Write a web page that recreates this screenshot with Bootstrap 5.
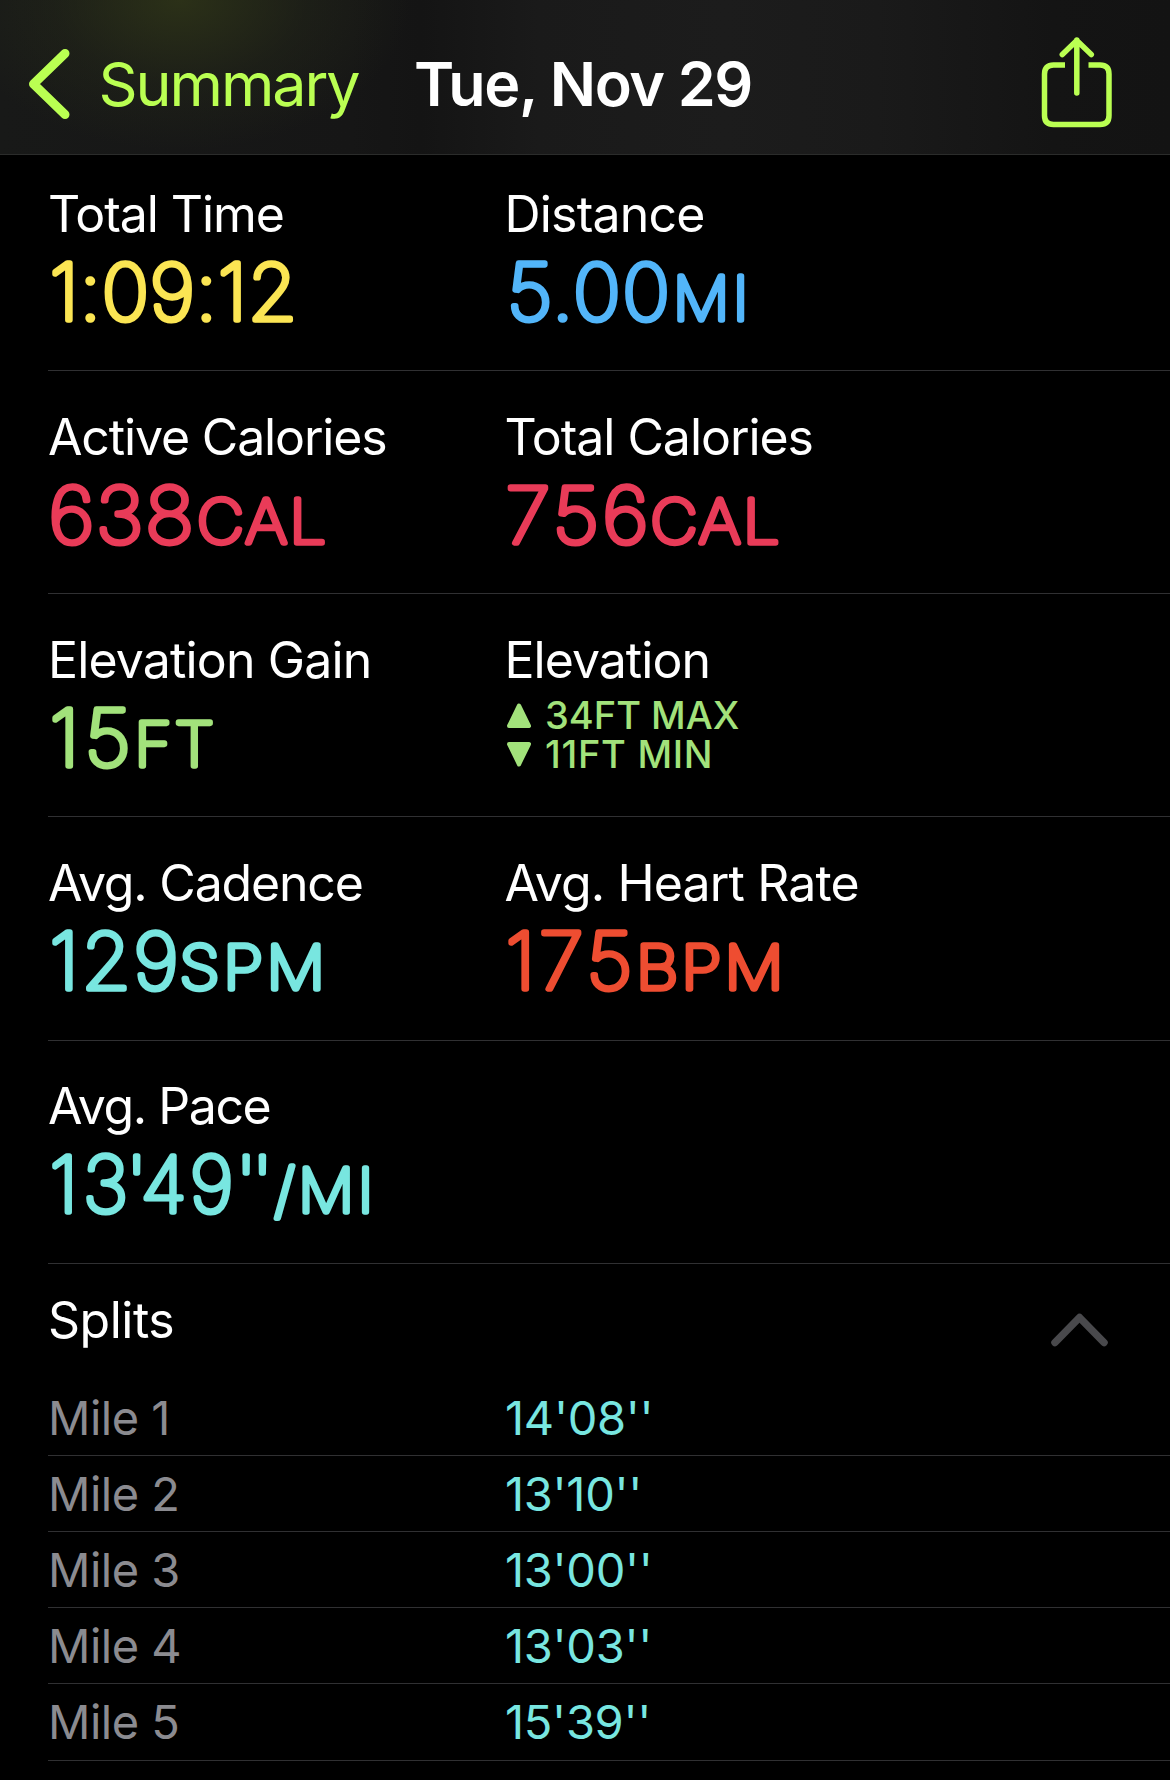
<!DOCTYPE html>
<html lang="en" data-bs-theme="dark">
<head>
<meta charset="utf-8">
<meta name="viewport" content="width=device-width, initial-scale=1">
<title>Workout – Tue, Nov 29</title>
<link href="https://cdn.jsdelivr.net/npm/bootstrap@5.3.0/dist/css/bootstrap.min.css" rel="stylesheet">
<style>
body{background:#000;color:#fff;font-family:Inter,"Liberation Sans",sans-serif;overflow-x:hidden}
.topbar{height:155px;padding:0 57px 0 28px;border-bottom:1px solid #2b2c2b;
  background:radial-gradient(ellipse 230px 150px at 180px 0,rgba(50,57,24,.75),rgba(40,45,25,.36) 55%,rgba(30,32,24,0)),
  linear-gradient(90deg,#181918 0,#161616 30%,#141414 36%,#1a1a1a 46%,#1c1c1c 62%,#1a1a1a 75%,#141414 90%,#131313 100%)}
.accent{color:#baff52}
.back-icon{margin-top:14px}
.share-icon{margin-top:10px}
.navlink,.navtitle{font-size:61px;line-height:76px;white-space:nowrap;margin-top:14px}
.navlink{letter-spacing:-2.08px;margin-left:26.5px}
.navtitle{font-weight:600;letter-spacing:-1.4px;margin-left:55.5px}
.stat-row{margin-left:48px;padding:36px 0 30px;border-bottom:1px solid #303032}
.stat-row:first-child{padding-top:29px}
.stat-row.r4{padding-bottom:31px}
.stat-row.r5{padding:35px 0 31px}
.stat{flex:0 0 456.5px}
.lbl{font-size:50px;line-height:60px;height:60px;white-space:nowrap}
.val{display:block;width:400px;height:96px;overflow:visible;font-size:77.5px;font-weight:100;stroke-width:5.6px;stroke-linejoin:round;stroke-linecap:round;fill:currentColor;stroke:currentColor}
.unit-sm{font-size:60px}
.elev{height:96px;padding-top:6px;font-size:38px;line-height:39px;font-weight:500;white-space:nowrap}
.elev svg{margin-left:2.5px;margin-right:14px}
.ls-min{letter-spacing:.7px}
.c-time{color:#fbe553}.c-dist{color:#52b5f9}.c-cal{color:#e93b58}.c-elev{color:#a2e27b}.c-pace{color:#78e6e0}.c-heart{color:#ee4d31}
.splits-head{height:116px;margin-left:48px;padding:26px 62px 0 0}
.chev{margin-top:22.5px}
.split{height:76px;margin-left:48px;padding-top:9px;border-bottom:1px solid #303032;font-size:47px;line-height:57px;letter-spacing:-.3px;white-space:nowrap}
.split:last-child{height:77px}
.split-name{flex:0 0 457px;color:#8b8b90;letter-spacing:-.5px}
</style>
</head>
<body>
<header class="topbar d-flex align-items-center">
  <svg class="back-icon" width="44" height="76" viewBox="0 0 44 76" fill="none" stroke="#baff52" stroke-width="9" stroke-linecap="round" stroke-linejoin="round"><path d="M37 7.500 5.500 38 37 68.500"/></svg>
  <a class="navlink accent text-decoration-none" href="#">Summary</a>
  <h1 class="navtitle mb-0">Tue, Nov 29</h1>
  <svg class="share-icon ms-auto" width="72" height="92" viewBox="0 0 72 92" fill="none" stroke="#baff52" stroke-width="5.500" stroke-linejoin="round"><path d="M24 29H12.500Q3.500 29 3.500 38V79.500Q3.500 88.500 12.500 88.500H59Q68 88.500 68 79.500V38Q68 29 59 29H47.500"/><path d="M35.800 57V4M21.300 18.500 35.800 4.500 50.300 18.500" stroke-linecap="round"/></svg>
</header>
<main>
<section>
  <div class="stat-row d-flex">
    <div class="stat"><div class="lbl" style="letter-spacing:-1.08px">Total Time</div>
      <svg class="val c-time"><text transform="translate(1.500 79) scale(1.03 1)" y="-3" letter-spacing=".7">1:09:12</text></svg></div>
    <div class="stat"><div class="lbl" style="letter-spacing:-.81px">Distance</div>
      <svg class="val c-dist"><text transform="translate(2 79) scale(1.04 1)" y="-3" letter-spacing="1.5">5.00</text><text class="unit-sm" transform="translate(168 79) scale(1.05 1)" y="-3" letter-spacing="3.200">MI</text></svg></div>
  </div>
  <div class="stat-row d-flex">
    <div class="stat"><div class="lbl" style="letter-spacing:-1.15px">Active Calories</div>
      <svg class="val c-cal"><text transform="translate(.5 79) scale(1.05 1)" y="-3" letter-spacing="1.6">638</text><text class="unit-sm" transform="translate(149 79) scale(1.08 1)" y="-3" letter-spacing="2.200">CAL</text></svg></div>
    <div class="stat"><div class="lbl" style="letter-spacing:-1.05px">Total Calories</div>
      <svg class="val c-cal"><text transform="translate(.5 79) scale(1.06 1)" y="-3" letter-spacing="3">756</text><text class="unit-sm" transform="translate(145.500 79) scale(1.08 1)" y="-3" letter-spacing="2.200">CAL</text></svg></div>
  </div>
  <div class="stat-row d-flex">
    <div class="stat"><div class="lbl" style="letter-spacing:-.85px">Elevation Gain</div>
      <svg class="val c-elev"><text transform="translate(1.500 79) scale(1.05 1)" y="-3" letter-spacing="5">15</text><text class="unit-sm" transform="translate(86.500 79) scale(1.06 1)" y="-3" letter-spacing="3">FT</text></svg></div>
    <div class="stat"><div class="lbl" style="letter-spacing:-.98px">Elevation</div>
      <div class="elev c-elev">
        <div class="d-flex align-items-center"><svg width="24" height="25" viewBox="0 0 24 25" fill="currentColor" stroke="currentColor" stroke-width="4" stroke-linejoin="round"><path d="M12 2.500 22 23H2Z"/></svg><span>34FT MAX</span></div>
        <div class="d-flex align-items-center"><svg width="24" height="25" viewBox="0 0 24 25" fill="currentColor" stroke="currentColor" stroke-width="4" stroke-linejoin="round"><path d="M12 22.500 22 2H2Z"/></svg><span class="ls-min">11FT MIN</span></div>
      </div></div>
  </div>
  <div class="stat-row r4 d-flex">
    <div class="stat"><div class="lbl" style="letter-spacing:-1.2px">Avg. Cadence</div>
      <svg class="val c-pace"><text transform="translate(1.500 79) scale(1.03 1)" y="-3" letter-spacing="2.500">129</text><text class="unit-sm" transform="translate(131.500 79) scale(1.09 1)" y="-3" letter-spacing="3.300">SPM</text></svg></div>
    <div class="stat"><div class="lbl" style="letter-spacing:-.87px">Avg. Heart Rate</div>
      <svg class="val c-heart"><text transform="translate(.5 79) scale(1.05 1)" y="-3" letter-spacing="3.500">175</text><text class="unit-sm" transform="translate(131 79) scale(1.1 1)" y="-3" letter-spacing="2.800">BPM</text></svg></div>
  </div>
  <div class="stat-row r5 d-flex">
    <div class="stat"><div class="lbl" style="letter-spacing:-1.42px">Avg. Pace</div>
      <svg class="val c-pace"><text transform="translate(1.500 79)" y="-3" dx="0 5 -2 -2 3 2 -5">13'49''</text><text class="unit-sm" transform="translate(226.500 79) scale(1.04 1)" y="-3" letter-spacing="3.500">/MI</text></svg></div>
  </div>
</section>
<section>
  <div class="splits-head d-flex justify-content-between">
    <div class="lbl" style="letter-spacing:-.5px">Splits</div>
    <svg class="chev" width="57" height="34" viewBox="0 0 57 34" fill="none" stroke="#49494c" stroke-width="7.500" stroke-linecap="round" stroke-linejoin="round"><path d="M4 29.500 28.500 4.500 53 29.500"/></svg>
  </div>
  <div>
    <div class="split d-flex"><div class="split-name">Mile 1</div><div class="c-pace">14'08''</div></div>
    <div class="split d-flex"><div class="split-name">Mile 2</div><div class="c-pace">13'10''</div></div>
    <div class="split d-flex"><div class="split-name">Mile 3</div><div class="c-pace">13'00''</div></div>
    <div class="split d-flex"><div class="split-name">Mile 4</div><div class="c-pace">13'03''</div></div>
    <div class="split d-flex"><div class="split-name">Mile 5</div><div class="c-pace">15'39''</div></div>
  </div>
</section>
</main>
<script src="https://cdn.jsdelivr.net/npm/bootstrap@5.3.0/dist/js/bootstrap.bundle.min.js"></script>
</body>
</html>
